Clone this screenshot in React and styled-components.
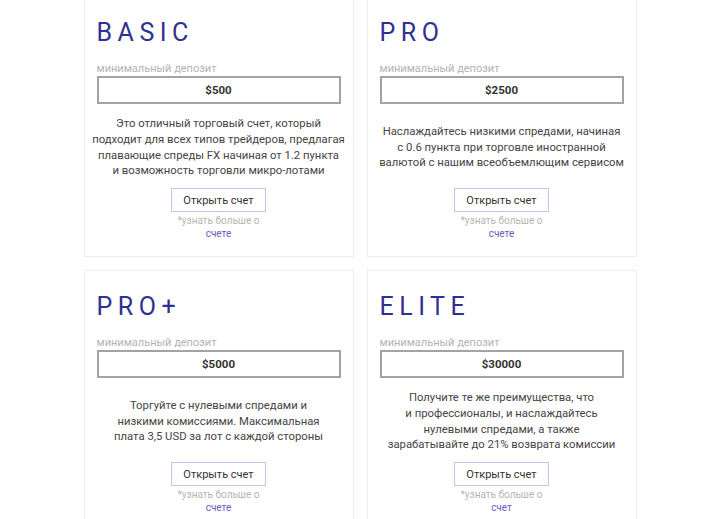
import React from 'react'
import styled, {createGlobalStyle} from 'styled-components'

const GlobalStyle = createGlobalStyle`
    body {
        margin: 0;
        background: #fff;
        font-family: Roboto, "Liberation Sans", sans-serif;
    }
`

const Grid = styled.div`
    width: 553px;
    margin: -4px auto 0;
    display: grid;
    grid-template-columns: repeat(2, minmax(0, 1fr));
    gap: 13px;
`

const Card = styled.div`
    box-sizing: border-box;
    height: 261px;
    padding: 21px 12px 0 12px;
    border: 1px solid #ededed;
    background: #fff;
    display: flex;
    flex-direction: column;
`

const Title = styled.h2`
    margin: 0;
    font-size: 25px;
    line-height: 30px;
    font-weight: 400;
    letter-spacing: 5.5px;
    color: #2e3192;
`

const Label = styled.div`
    margin-top: 14px;
    font-size: 11px;
    line-height: 14px;
    color: #b3b3b3;
`

const Deposit = styled.div`
    box-sizing: border-box;
    height: 28px;
    border: 2px solid #a3a3a3;
    display: flex;
    align-items: center;
    justify-content: center;
    font-size: 11.5px;
    font-weight: 700;
    color: #333;
`

const Description = styled.p`
    box-sizing: border-box;
    margin: 0;
    height: 84px;
    padding-top: 3px;
    display: flex;
    align-items: center;
    justify-content: center;
    text-align: center;
    white-space: nowrap;
    font-size: 11.3px;
    line-height: 15.7px;
    color: #444;
`

const OpenButton = styled.button`
    align-self: center;
    box-sizing: border-box;
    height: 24px;
    padding: 0 11px;
    background: #fff;
    border: 1px solid #c9c2ec;
    font-family: inherit;
    font-size: 11px;
    color: #333;
    cursor: pointer;
`

const More = styled.div`
    margin-top: 2px;
    text-align: center;
    font-size: 10px;
    line-height: 13px;
    color: #b5b5b5;
    a {
        color: #6a5cc4;
        text-decoration: none;
    }
`

const plans = [
    {
        name: 'BASIC',
        deposit: '$500',
        text: ['Это отличный торговый счет, который', 'подходит для всех типов трейдеров, предлагая', 'плавающие спреды FX начиная от 1.2 пункта', 'и возможность торговли микро-лотами'],
        link: 'счете',
    },
    {
        name: 'PRO',
        deposit: '$2500',
        text: ['Наслаждайтесь низкими спредами, начиная', 'с 0.6 пункта при торговле иностранной', 'валютой с нашим всеобъемлющим сервисом'],
        link: 'счете',
    },
    {
        name: 'PRO+',
        deposit: '$5000',
        text: ['Торгуйте с нулевыми спредами и', 'низкими комиссиями. Максимальная', 'плата 3,5 USD за лот с каждой стороны'],
        link: 'счете',
    },
    {
        name: 'ELITE',
        deposit: '$30000',
        text: ['Получите те же преимущества, что', 'и профессионалы, и наслаждайтесь', 'нулевыми спредами, а также', 'зарабатывайте до 21% возврата комиссии'],
        link: 'счет',
    },
]

export default function App() {
    return (
        <>
            <GlobalStyle />
            <Grid>
                {plans.map(plan => (
                    <Card key={plan.name}>
                        <Title>{plan.name}</Title>
                        <Label>минимальный депозит</Label>
                        <Deposit>{plan.deposit}</Deposit>
                        <Description>
                            <span>
                                {plan.text.map((line, i) => (
                                    <React.Fragment key={i}>
                                        {line}
                                        {i < plan.text.length - 1 && <br />}
                                    </React.Fragment>
                                ))}
                            </span>
                        </Description>
                        <OpenButton type="button">Открыть счет</OpenButton>
                        <More>
                            *узнать больше о<br />
                            <a href="#">{plan.link}</a>
                        </More>
                    </Card>
                ))}
            </Grid>
        </>
    )
}
